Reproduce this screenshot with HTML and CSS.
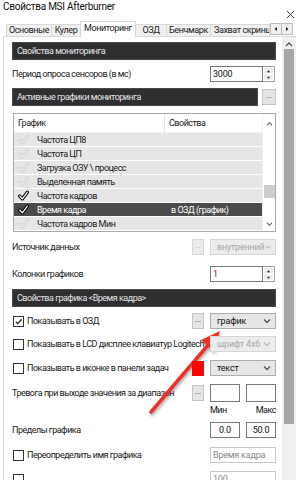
FILE: index.html
```html
<!DOCTYPE html>
<html lang="ru">
<head>
<meta charset="utf-8">
<link rel="stylesheet" href="styles.css">
</head>
<body>
<div class="window">
  <div class="titlebar">
    <span class="title">Свойства MSI Afterburner</span>
    <svg class="close" viewBox="0 0 10 10"><path d="M1 1 L9 9 M9 1 L1 9"/></svg>
  </div>
  <div class="tabs">
    <div class="tab t1">Основные</div>
    <div class="tab t2">Кулер</div>
    <div class="tab t3 active">Мониторинг</div>
    <div class="tab t4">ОЗД</div>
    <div class="tab t5">Бенчмарк</div>
    <div class="tab t6">Захват скриншо</div>
    <div class="tabarrows">
      <span class="tarr"><svg viewBox="0 0 6 6"><path d="M4 1 L1.5 3 L4 5 Z"/></svg></span>
      <span class="tarr"><svg viewBox="0 0 6 6"><path d="M2 1 L4.5 3 L2 5 Z"/></svg></span>
    </div>
  </div>
  <div class="panel">
    <div class="main">
      <div class="header h1">Свойства мониторинга</div>
      <div class="row r-period">
        <span class="label">Период опроса сенсоров (в мс)</span>
        <span></span>
        <div class="spin"><span class="input">3000</span><span class="spinbtns"><span class="sb"><svg viewBox="0 0 6 4"><path d="M1 3.5 L3 1 L5 3.5 Z"/></svg></span><span class="sb"><svg viewBox="0 0 6 4"><path d="M1 0.5 L3 3 L5 0.5 Z"/></svg></span></span></div>
      </div>
      <div class="hrow">
        <div class="header">Активные графики мониторинга</div>
        <span class="btn">...</span>
      </div>
      <div class="list">
        <div class="lhead"><span class="c1">График</span><span class="c2">Свойства</span></div>
        <div class="lrow"><svg class="chk off" viewBox="0 0 10 10"><path class="o" d="M1.5 5.5 L4 8 L8.5 2"/><path class="i" d="M1.5 5.5 L4 8 L8.5 2"/></svg><span class="c1">Частота ЦП8</span><span class="c2"></span></div>
        <div class="lrow"><svg class="chk off" viewBox="0 0 10 10"><path class="o" d="M1.5 5.5 L4 8 L8.5 2"/><path class="i" d="M1.5 5.5 L4 8 L8.5 2"/></svg><span class="c1">Частота ЦП</span><span class="c2"></span></div>
        <div class="lrow"><svg class="chk off" viewBox="0 0 10 10"><path class="o" d="M1.5 5.5 L4 8 L8.5 2"/><path class="i" d="M1.5 5.5 L4 8 L8.5 2"/></svg><span class="c1">Загрузка ОЗУ \ процесс</span><span class="c2"></span></div>
        <div class="lrow"><svg class="chk off" viewBox="0 0 10 10"><path class="o" d="M1.5 5.5 L4 8 L8.5 2"/><path class="i" d="M1.5 5.5 L4 8 L8.5 2"/></svg><span class="c1">Выделенная память</span><span class="c2"></span></div>
        <div class="lrow"><svg class="chk on" viewBox="0 0 10 10"><path class="o" d="M1.5 5.5 L4 8 L8.5 2"/><path class="i" d="M1.5 5.5 L4 8 L8.5 2"/></svg><span class="c1">Частота кадров</span><span class="c2"></span></div>
        <div class="lrow sel"><svg class="chk on" viewBox="0 0 10 10"><path class="o" d="M1.5 5.5 L4 8 L8.5 2"/><path class="i" d="M1.5 5.5 L4 8 L8.5 2"/></svg><span class="c1">Время кадра</span><span class="c2">в ОЗД (график)</span></div>
        <div class="lrow"><svg class="chk off" viewBox="0 0 10 10"><path class="o" d="M1.5 5.5 L4 8 L8.5 2"/><path class="i" d="M1.5 5.5 L4 8 L8.5 2"/></svg><span class="c1">Частота кадров Мин</span><span class="c2"></span></div>
        <div class="lscroll">
          <svg class="chev up" viewBox="0 0 8 6"><path d="M1 5 L4 2 L7 5"/></svg>
          <div class="lthumb"></div>
          <svg class="chev down" viewBox="0 0 8 6"><path d="M1 1 L4 4 L7 1"/></svg>
        </div>
      </div>
      <div class="row r-src">
        <span class="label">Источник данных</span>
        <span class="btn dis">...</span>
        <div class="combo dis"><span>внутренний</span><svg class="cv" viewBox="0 0 8 6"><path d="M1 1.5 L4 4.5 L7 1.5"/></svg></div>
      </div>
      <div class="sep s1"></div>
      <div class="row r-cols">
        <span class="label">Колонки графиков</span>
        <span></span>
        <div class="spin"><span class="input red">1</span><span class="spinbtns"><span class="sb"><svg viewBox="0 0 6 4"><path d="M1 3.5 L3 1 L5 3.5 Z"/></svg></span><span class="sb"><svg viewBox="0 0 6 4"><path d="M1 0.5 L3 3 L5 0.5 Z"/></svg></span></span></div>
      </div>
      <div class="header h3">Свойства графика &lt;Время кадра&gt;</div>
      <div class="row r-osd">
        <span class="label"><span class="cb on"><svg viewBox="0 0 10 10"><path d="M2 5 L4 7.5 L8.5 2.5"/></svg></span>Показывать в ОЗД</span>
        <span class="btn">...</span>
        <div class="combo"><span>график</span><svg class="cv" viewBox="0 0 8 6"><path d="M1 1.5 L4 4.5 L7 1.5"/></svg></div>
      </div>
      <div class="row r-lcd">
        <span class="label"><span class="cb"></span>Показывать в LCD дисплее клавиатур Logitech</span>
        <span></span>
        <div class="combo dis"><span>шрифт 4x6</span><svg class="cv" viewBox="0 0 8 6"><path d="M1 1.5 L4 4.5 L7 1.5"/></svg></div>
      </div>
      <div class="row r-tray">
        <span class="label"><span class="cb"></span>Показывать в иконке в панели задач</span>
        <span class="swatch"></span>
        <div class="combo"><span>текст</span><svg class="cv" viewBox="0 0 8 6"><path d="M1 1.5 L4 4.5 L7 1.5"/></svg></div>
      </div>
      <div class="row r-alarm">
        <span class="label">Тревога при выходе значения за диапазон</span>
        <span class="btn">...</span>
        <div class="pair"><span class="input c"></span><span class="input c"></span></div>
      </div>
      <div class="row r-minmax">
        <span></span><span></span>
        <div class="pair lbls"><span>Мин</span><span class="rt">Макс</span></div>
      </div>
      <div class="sep s2"></div>
      <div class="row r-lim">
        <span class="label">Пределы графика</span>
        <span></span>
        <div class="pair"><span class="input c">0.0</span><span class="input c">50.0</span></div>
      </div>
      <div class="row r-name">
        <span class="label"><span class="cb"></span>Переопределить имя графика</span>
        <span></span>
        <span class="input ph">Время кадра</span>
      </div>
      <div class="row r-next">
        <span class="label"><span class="cb"></span></span>
        <span></span>
        <span class="input ph">100</span>
      </div>
    </div>
    <div class="vscroll">
      <svg class="chev up" viewBox="0 0 8 6"><path d="M1 5 L4 2 L7 5"/></svg>
      <div class="vthumb"></div>
    </div>
  </div>
  <svg class="arrow" viewBox="0 0 300 480" width="300" height="480">
    <defs>
      <filter id="sh" x="-20%" y="-20%" width="140%" height="140%">
        <feDropShadow dx="1" dy="2" stdDeviation="1.5" flood-color="#000" flood-opacity="0.35"/>
      </filter>
    </defs>
    <g filter="url(#sh)">
      <line x1="151" y1="412" x2="209" y2="344" stroke="#e8302c" stroke-width="3.5" stroke-linecap="round"/>
      <polygon points="220,331 214,352 201,340" fill="#e8302c"/>
    </g>
  </svg>
</div>
</body>
</html>
```
FILE: styles.css
```css
* { box-sizing: border-box; }
html, body { margin: 0; padding: 0; }
body {
  width: 300px; height: 480px; overflow: hidden;
  font-family: Roboto, "Noto Sans", sans-serif;
  font-size: 9px;
  letter-spacing: -0.5px;
  color: #1a1a1a;
  background: #fff;
}
.window { position: relative; width: 300px; height: 480px; display: flex; flex-direction: column; background: #fff; }
.titlebar { height: 21px; display: flex; align-items: flex-start; justify-content: space-between; padding: 0 5px 0 3px; }
.title { font-size: 10px; color: #111; line-height: 14px; letter-spacing: -0.25px; }
.close { width: 9px; height: 9px; margin-top: 10px; }
.close path { stroke: #333; stroke-width: 1; fill: none; }
.tabs { height: 16px; display: flex; align-items: flex-end; padding-left: 4px; border-bottom: 1px solid #d9d9d9; margin-left: 3px; margin-right: 4px; position: relative; z-index: 1; }
.tab { height: 12px; border: 1px solid #d9d9d9; border-bottom: none; margin-left: -1px; background: #f0f0f0; line-height: 11px; text-align: center; white-space: nowrap; overflow: hidden; color: #222; letter-spacing: -0.4px; }
.tab.active { height: 16px; background: #fff; margin-bottom: -1px; line-height: 13px; }
.t1 { width: 46px; } .t2 { width: 30px; } .t3 { width: 56px; } .t4 { width: 32px; } .t5 { width: 45px; } .t6 { width: 60px; text-align: left; padding-left: 3px; }
.tabarrows { display: flex; align-self: flex-start; margin-top: 2px; }
.tarr { width: 12px; height: 12px; border: 1px solid #bcbcbc; background: #f0f0f0; display: flex; align-items: center; justify-content: center; margin-right: -1px; }
.tarr svg { width: 6px; height: 6px; }
.tarr path { fill: #222; }
.panel { flex: 1; display: flex; margin-left: 3px; border-left: 1px solid #d9d9d9; min-height: 0; }
.main { width: 273px; padding: 5px 0 0 8px; display: flex; flex-direction: column; overflow: hidden; }
.header { height: 18px; background: #2f2f32; color: #e4e4e4; line-height: 16px; padding-left: 4px; border: 1px solid #4a4a4a; white-space: nowrap; }
.h1 { width: 264px; }
.row { display: grid; grid-template-columns: minmax(0, 1fr) 12px 66px; column-gap: 6px; align-items: center; height: 16px; width: 264px; }
.row > * { position: relative; }
.row > .btn, .row > .combo, .row > .spin, .row > .pair, .row > .input, .row > .swatch { z-index: 1; }
.label { white-space: nowrap; display: flex; align-items: center; overflow: visible; z-index: 0; }
.r-period { margin-top: 6px; }
.hrow { display: flex; align-items: center; margin-top: 6px; width: 264px; }
.hrow .header { width: 246px; }
.hrow .btn { margin-left: 4px; width: 14px; }
.btn { height: 16px; background: #e5e5e5; border: 1px solid #c4c4c4; font-size: 8px; line-height: 12px; text-align: center; color: #444; letter-spacing: 0; }
.btn.dis { color: #aaa; border-color: #d8d8d8; background: #ececec; }
.spin { display: flex; height: 16px; width: 65px; }
.input { height: 16px; border: 1px solid #7a7a7a; background: #fff; line-height: 14px; padding-left: 2px; color: #111; white-space: nowrap; overflow: hidden; letter-spacing: -0.2px; }
.spin .input { flex: 1; }
.input.red { color: #c00; }
.input.c { text-align: center; padding-left: 0; }
.input.ph { color: #888; border-color: #c8c8c8; }
.spinbtns { width: 12px; display: flex; flex-direction: column; border: 1px solid #a0a0a0; border-left: none; }
.sb { flex: 1; background: #ececec; display: flex; align-items: center; justify-content: center; border: 1px solid #fff; }
.sb svg { width: 5px; height: 4px; }
.sb path { fill: #222; }
.list { position: relative; margin-top: 7px; width: 263px; margin-left: 1px; height: 119px; border: 1px solid #a9a9a9; background: #fff; }
.lhead { height: 19px; display: flex; align-items: center; border-bottom: 1px solid #f0f0f0; }
.lhead .c1 { width: 150px; flex: none; padding-left: 4px; }
.lhead .c2 { border-left: 1px solid #e5e5e5; height: 19px; line-height: 19px; padding-left: 4px; }
.lrow { height: 14px; display: flex; align-items: center; background: #e6e6e6; border-bottom: 1px solid #fff; width: 248px; }
.lrow .c1 { width: 135px; flex: none; padding-left: 8px; }
.lrow .c2 { padding-left: 7px; color: #fff; }
.lrow.sel { background: #4b4b4b; color: #fff; }
.chk { width: 11px; height: 11px; margin-left: 4px; flex: none; }
.chk path { fill: none; stroke-linecap: round; stroke-linejoin: round; }
.chk.off .o { stroke: #cfcfcf; stroke-width: 2.6; }
.chk.off .i { stroke: #ececec; stroke-width: 1.2; }
.chk.on .o { stroke: #000; stroke-width: 3; }
.chk.on .i { stroke: #fff; stroke-width: 1.1; }
.lscroll { position: absolute; right: 0; top: 0; bottom: 0; width: 13px; background: #fff; border-left: 1px solid #f0f0f0; }
.lscroll .chev { position: absolute; left: 3px; width: 7px; height: 5px; }
.lscroll .up { top: 7px; }
.lscroll .down { bottom: 4px; }
.chev path, .cv path { fill: none; stroke: #555; stroke-width: 1.3; }
.lthumb { position: absolute; left: 1px; width: 11px; top: 71px; height: 13px; background: #cdcdcd; }
.r-src { margin-top: 7px; }
.combo { height: 16px; display: flex; align-items: center; justify-content: space-between; padding: 0 4px 0 6px; background: #e6e6e6; border: 1px solid #adadad; color: #111; letter-spacing: -0.2px; }
.combo .cv { width: 8px; height: 6px; }
.combo.dis { background: #ececec; border-color: #d6d6d6; color: #a8a8a8; }
.combo.dis .cv path { stroke: #bbb; }
.sep { height: 1px; background: #dadada; width: 263px; margin-left: 1px; }
.s1 { margin-top: 7px; }
.r-cols { margin-top: 4px; }
.h3 { margin-top: 7px; width: 264px; }
.r-osd { margin-top: 6px; }
.r-lcd { margin-top: 7px; }
.r-tray { margin-top: 8px; }
.r-alarm { margin-top: 8px; height: 18px; }
.r-alarm .input { height: 18px; }
.r-minmax { margin-top: 3px; height: 14px; }
.s2 { margin-top: 3px; }
.r-lim { margin-top: 4px; }
.r-name { margin-top: 9px; }
.r-next { margin-top: 8px; }
.cb { width: 11px; height: 11px; border: 1px solid #333; margin-left: 1px; margin-right: 3px; background: #fff; display: inline-flex; flex: none; }
.cb svg { width: 9px; height: 9px; }
.cb svg path { fill: none; stroke: #222; stroke-width: 1.3; }
.swatch { height: 15px; background: #f00; }
.pair { display: grid; grid-template-columns: 30px 30px; column-gap: 6px; }
.lbls span { color: #111; }
.lbls .rt { text-align: right; }
.vscroll { position: relative; margin-left: 5px; width: 14px; background: #f0f0f0; }
.vscroll .chev { position: absolute; left: 3px; top: 4px; width: 8px; height: 6px; }
.vthumb { position: absolute; left: 2px; width: 10px; top: 12px; height: 375px; background: #a6a6a6; }
.arrow { position: absolute; left: 0; top: 0; pointer-events: none; }
```
